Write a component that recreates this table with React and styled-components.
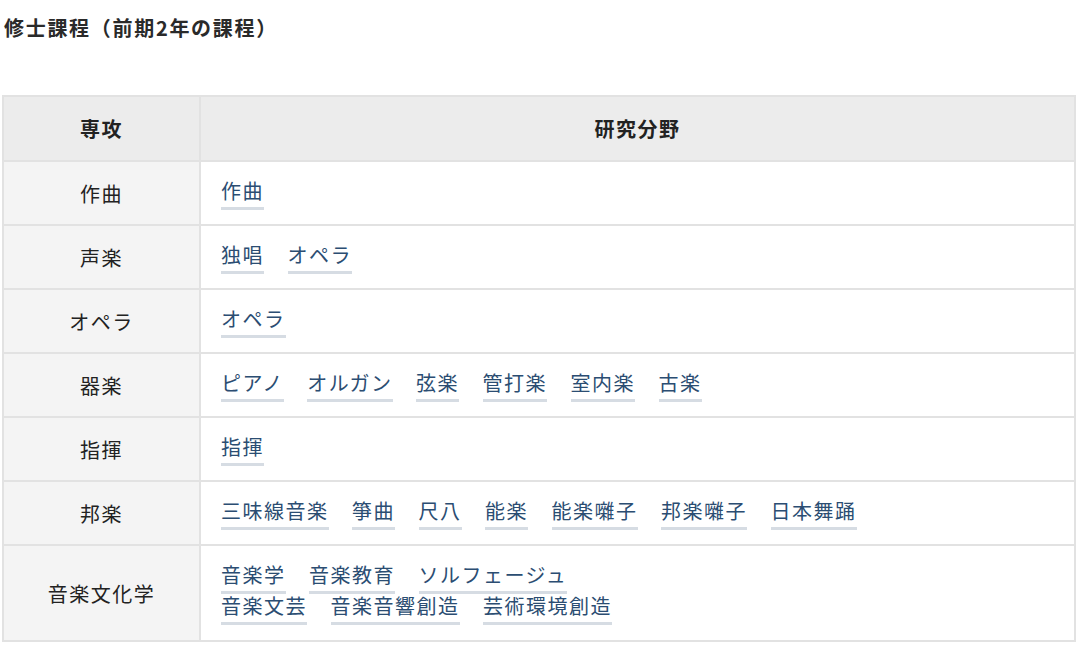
import React from 'react';
import styled, { createGlobalStyle } from 'styled-components';

const GlobalStyle = createGlobalStyle`
  html, body {
    margin: 0;
    padding: 0;
    background: #ffffff;
  }
  body {
    font-family: "Noto Sans CJK JP", "Noto Sans", sans-serif;
    color: #222222;
  }
`;

const Page = styled.div`
  width: 1082px;
  padding: 14px 6px 0 2px;
  box-sizing: border-box;
`;

const Heading = styled.h3`
  margin: 0 0 53px 2px;
  font-size: 20px;
  font-weight: 700;
  line-height: 28px;
  color: #2a2a2a;
  letter-spacing: 1.7px;
`;

const Table = styled.table`
  width: 1074px;
  border-collapse: collapse;
  border: 2px solid #e2e2e2;
  font-size: 20px;
  letter-spacing: 1.5px;
`;

const HeadCell = styled.th`
  height: 63px;
  padding: 0;
  background: #ececec;
  border: 2px solid #e2e2e2;
  font-weight: 700;
  text-align: center;
  color: #222222;
  width: ${props => props.$width || 'auto'};
`;

const Row = styled.tr`
  height: ${props => (props.$tall ? '96px' : '64px')};
`;

const KeyCell = styled.td`
  padding: 0;
  background: #f4f4f4;
  border: 2px solid #e2e2e2;
  text-align: center;
  color: #222222;
`;

const FieldCell = styled.td`
  padding: 4px 20px 2px 20px;
  background: #ffffff;
  border: 2px solid #e2e2e2;
  line-height: 31px;
`;

const FieldLine = styled.div`
  display: flex;
  gap: 23.5px;
`;

const FieldLink = styled.a`
  color: #2b4d72;
  text-decoration: none;
  border-bottom: 3px solid #d6dce3;
  line-height: 24px;
  padding-bottom: 4px;
  cursor: pointer;
`;

const rows = [
  { major: '作曲', fields: [['作曲']] },
  { major: '声楽', fields: [['独唱', 'オペラ']] },
  { major: 'オペラ', fields: [['オペラ']] },
  { major: '器楽', fields: [['ピアノ', 'オルガン', '弦楽', '管打楽', '室内楽', '古楽']] },
  { major: '指揮', fields: [['指揮']] },
  { major: '邦楽', fields: [['三味線音楽', '箏曲', '尺八', '能楽', '能楽囃子', '邦楽囃子', '日本舞踊']] },
  {
    major: '音楽文化学',
    fields: [
      ['音楽学', '音楽教育', 'ソルフェージュ'],
      ['音楽文芸', '音楽音響創造', '芸術環境創造'],
    ],
  },
];

const App = () => (
  <>
    <GlobalStyle />
    <Page>
      <Heading>修士課程（前期2年の課程）</Heading>
      <Table>
        <thead>
          <tr>
            <HeadCell $width="195px">専攻</HeadCell>
            <HeadCell>研究分野</HeadCell>
          </tr>
        </thead>
        <tbody>
          {rows.map(row => (
            <Row key={row.major} $tall={row.fields.length > 1}>
              <KeyCell>{row.major}</KeyCell>
              <FieldCell>
                {row.fields.map((line, i) => (
                  <FieldLine key={i}>
                    {line.map(name => (
                      <FieldLink key={name}>{name}</FieldLink>
                    ))}
                  </FieldLine>
                ))}
              </FieldCell>
            </Row>
          ))}
        </tbody>
      </Table>
    </Page>
  </>
);

export default App;
